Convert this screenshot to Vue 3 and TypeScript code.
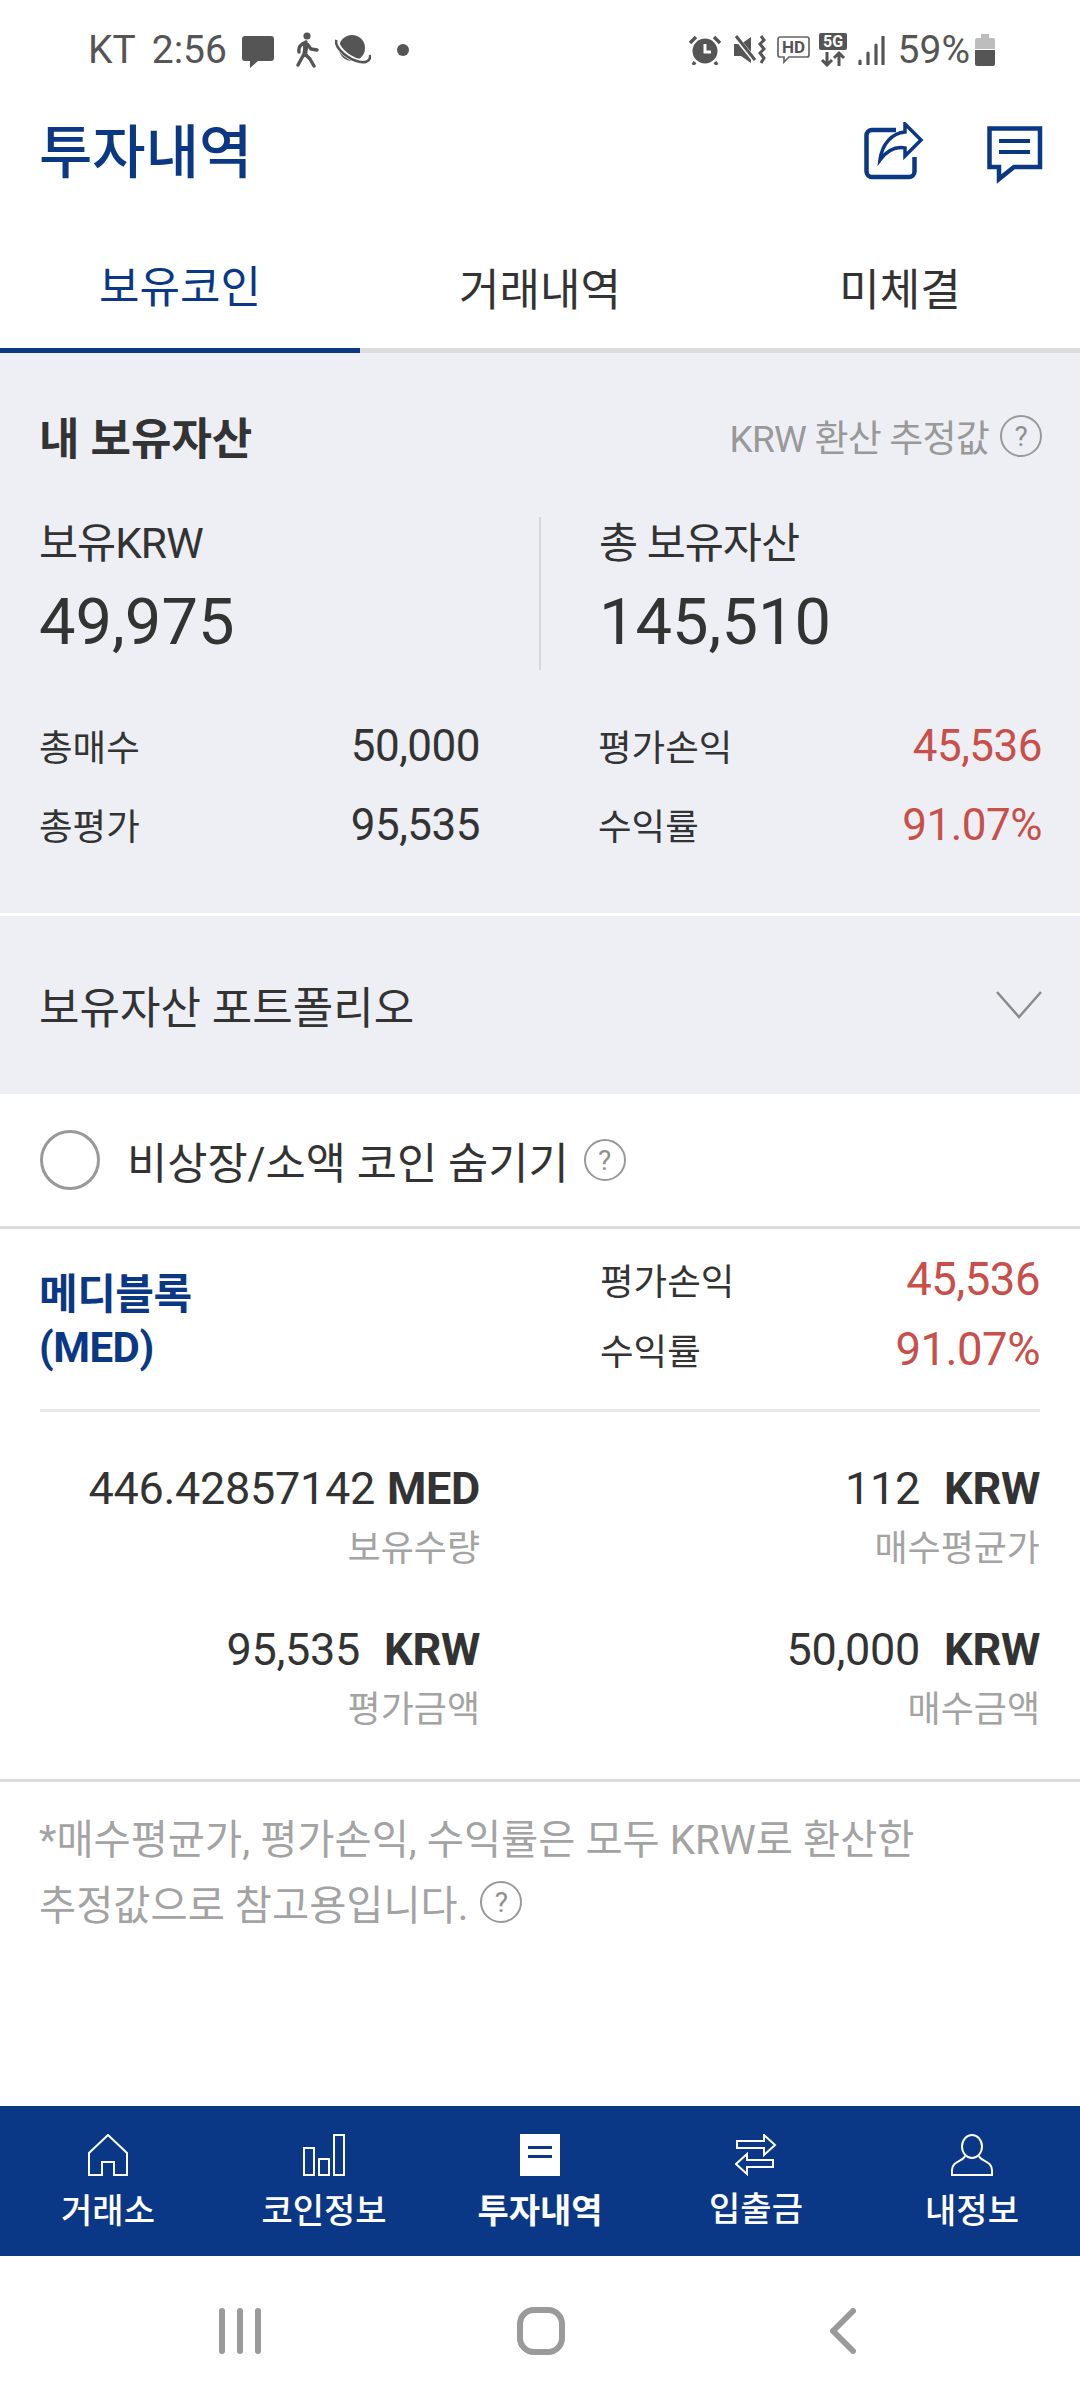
<script setup lang="ts">
const stats = [
  { l: '총매수', v: '50,000', rl: '평가손익', rv: '45,536' },
  { l: '총평가', v: '95,535', rl: '수익률', rv: '91.07%' },
]
const details = [
  { n: '446.42857142', gap: 'thin', u: 'MED', l: '보유수량' },
  { n: '112', gap: 'wide', u: 'KRW', l: '매수평균가' },
  { n: '95,535', gap: 'wide', u: 'KRW', l: '평가금액' },
  { n: '50,000', gap: 'wide', u: 'KRW', l: '매수금액' },
]
</script>

<template>
  <div class="page">
    <div class="status">
      <span class="st-text kt">KT</span>
      <span class="st-text time">2:56</span>
      <svg class="s-msg" width="32" height="32" viewBox="0 0 32 32"><path d="M3 0H29a3 3 0 0 1 3 3V22a3 3 0 0 1-3 3H16L8 32V25H3a3 3 0 0 1-3-3V3a3 3 0 0 1 3-3Z" fill="#555"/></svg>
      <svg class="s-walk" width="24" height="36" viewBox="0 0 24 36"><circle cx="12" cy="4" r="3.6" fill="#555"/><path d="M11 10C6 12 3 15 4 20M11 10 9 22 3 33M10 22 15 27 19 34M13 13 16 17 22 18" fill="none" stroke="#555" stroke-width="3.4" stroke-linecap="round" stroke-linejoin="round"/><path d="M8 11h6l-2 12H8Z" fill="#555"/></svg>
      <svg class="s-planet" width="36" height="30" viewBox="0 0 36 30"><circle cx="17" cy="13" r="13" fill="#555"/><path d="M3 4C-1 9 8 20 20 25 29 28 35 26 34 20" fill="none" stroke="#fff" stroke-width="5"/><path d="M1.5 5C-1 11 9 21 20 25.500 29 29 36 27 35 20" fill="none" stroke="#555" stroke-width="2.600"/></svg>
      <span class="s-dot"></span>
      <span class="spacer"></span>
      <svg class="s-alarm" width="32" height="30" viewBox="0 0 32 30"><circle cx="16" cy="16" r="12.500" fill="#555"/><path d="M16 9v8h6" fill="none" stroke="#fff" stroke-width="3"/><path d="M1 8 7 2M31 8 25 2M6 27 4 30M26 27 28 30" stroke="#555" stroke-width="3.400" fill="none"/></svg>
      <svg class="s-mute" width="32" height="30" viewBox="0 0 32 30"><path d="M0 9H7L17 2V28L7 21H0Z" fill="#555"/><path d="M1 1 22 27" stroke="#fff" stroke-width="5"/><path d="M2 1 21 25" stroke="#555" stroke-width="3"/><path d="M27 1l3 4-4 4 4 5-4 4 4 5-3 5" fill="none" stroke="#555" stroke-width="3"/></svg>
      <svg class="s-hd" width="33" height="28" viewBox="0 0 33 28"><path d="M3 1H30a2 2 0 0 1 2 2V19a2 2 0 0 1-2 2H12L7 26V21H3a2 2 0 0 1-2-2V3a2 2 0 0 1 2-2Z" fill="none" stroke="#666" stroke-width="1.700"/><text x="16.500" y="17" class="ic-text" font-size="17" font-weight="700" text-anchor="middle" fill="#555">HD</text></svg>
      <svg class="s-5g" width="28" height="34" viewBox="0 0 28 34"><rect width="28" height="17" rx="2" fill="#555"/><text x="14" y="14" class="ic-text" font-size="16" font-weight="700" text-anchor="middle" fill="#fff">5G</text><path d="M8 19V32M3 27l5 5 5-5M20 33V20M15 25l5-5 5 5" fill="none" stroke="#555" stroke-width="3"/></svg>
      <svg class="s-signal" width="27" height="29" viewBox="0 0 27 29"><path d="M2 25v3M10 17v11M18 9v19M25 1v27" stroke="#555" stroke-width="3.200" stroke-linecap="round"/></svg>
      <span class="st-text pct">59%</span>
      <svg class="s-batt" width="20" height="32" viewBox="0 0 20 32"><path d="M6 0h8v4h4a2 2 0 0 1 2 2V15H0V6a2 2 0 0 1 2-2H6Z" fill="#bdbdbd"/><path d="M0 16H20V30a2 2 0 0 1-2 2H2a2 2 0 0 1-2-2Z" fill="#555"/></svg>
    </div>

    <header class="head">
      <h1 class="title">투자내역</h1>
      <svg class="h-share" width="60" height="58" viewBox="0 0 60 58">
        <path d="M32 8H8a5.500 5.500 0 0 0-5.500 5.500V49.500A5.500 5.500 0 0 0 8 55H45a5.500 5.500 0 0 0 5.500-5.500V35" fill="none" stroke="#0b3885" stroke-width="4.500"/>
        <path d="M41 2 57 18 41 34V26C30 24 22 30 16 38 18 22 28 11 41 10Z" fill="#fff" stroke="#0b3885" stroke-width="3.500" stroke-linejoin="miter"/>
      </svg>
      <svg class="h-msg" width="56" height="58" viewBox="0 0 56 58">
        <path d="M2.500 2.500H53V41H27L12 53V41H2.500Z" fill="none" stroke="#0b3885" stroke-width="4.500"/>
        <path d="M12 15H43M12 26H43" stroke="#0b3885" stroke-width="4"/>
      </svg>
    </header>

    <nav class="tabs">
      <div class="tab active">보유코인</div>
      <div class="tab">거래내역</div>
      <div class="tab">미체결</div>
    </nav>

    <section class="panel">
      <div class="panel-head">
        <span class="panel-title">내 보유자산</span>
        <span class="hint">KRW 환산 추정값<span class="help big">?</span></span>
      </div>
      <div class="summary">
        <div class="sum-col">
          <div class="sum-label">보유KRW</div>
          <div class="sum-num">49,975</div>
        </div>
        <div class="sum-col sum-right">
          <div class="sum-label">총 보유자산</div>
          <div class="sum-num">145,510</div>
        </div>
      </div>
      <div class="stats">
        <div v-for="s in stats" :key="s.l" class="stat-row">
          <div class="stat"><span class="stat-l">{{ s.l }}</span><span class="stat-v">{{ s.v }}</span></div>
          <div class="stat"><span class="stat-l">{{ s.rl }}</span><span class="stat-v red">{{ s.rv }}</span></div>
        </div>
      </div>
    </section>

    <section class="portfolio">
      <span>보유자산 포트폴리오</span>
      <svg width="46" height="28" viewBox="0 0 46 28"><path d="M1 1 23 26 45 1" fill="none" stroke="#8a8a8a" stroke-width="2.500"/></svg>
    </section>

    <section class="option">
      <span class="radio"></span>
      <span class="option-text">비상장/소액 코인 숨기기</span>
      <span class="help">?</span>
    </section>

    <section class="coin">
      <div class="coin-name">메디블록<br />(MED)</div>
      <div class="coin-stats">
        <div class="stat coin-line"><span class="stat-l">평가손익</span><span class="coin-v red">45,536</span></div>
        <div class="stat coin-line"><span class="stat-l">수익률</span><span class="coin-v red">91.07%</span></div>
      </div>
    </section>
    <div class="inner-sep"></div>

    <section class="details">
      <div v-for="d in details" :key="d.l" class="cell">
        <div class="cell-v">{{ d.n }}<span :class="['cell-u', d.gap]">{{ d.u }}</span></div>
        <div class="cell-l">{{ d.l }}</div>
      </div>
    </section>

    <section class="note">
      <p>*매수평균가, 평가손익, 수익률은 모두 KRW로 환산한</p>
      <p>추정값으로 참고용입니다.<span class="help">?</span></p>
    </section>

    <footer class="bottom">
      <div class="bn">
        <svg width="40" height="42" viewBox="0 0 40 42"><path d="M1 41V19L20 1 39 19V41H26V28H14V41Z" fill="none" stroke="#fff" stroke-width="2"/></svg>
        <span>거래소</span>
      </div>
      <div class="bn">
        <svg width="42" height="42" viewBox="0 0 42 42"><path d="M1 14H11V41H1ZM16 25H26V41H16ZM31 1H41V41H31Z" fill="none" stroke="#fff" stroke-width="2"/></svg>
        <span>코인정보</span>
      </div>
      <div class="bn on">
        <svg width="40" height="42" viewBox="0 0 40 42"><rect width="40" height="42" fill="#fff"/><path d="M8 13.500H32M8 22.500H32" stroke="#0a3786" stroke-width="3"/></svg>
        <span>투자내역</span>
      </div>
      <div class="bn">
        <svg width="42" height="42" viewBox="0 0 42 42"><path d="M2 7H29V1L40 11 29 21V14H2ZM38 26H12V20L1 30 12 40V33H38Z" fill="none" stroke="#fff" stroke-width="2"/></svg>
        <span class="up">입출금</span>
      </div>
      <div class="bn">
        <svg width="42" height="42" viewBox="0 0 42 42"><ellipse cx="21" cy="12.500" rx="10" ry="11.500" fill="none" stroke="#fff" stroke-width="2"/><path d="M14 22C13 27 1 27 1 36V41H41V36C41 27 29 27 28 22" fill="none" stroke="#fff" stroke-width="2"/></svg>
        <span>내정보</span>
      </div>
    </footer>

    <div class="keys">
      <svg width="44" height="46" viewBox="0 0 44 46"><path d="M4 3V43M22 3V43M40 3V43" stroke="#9a9a9a" stroke-width="6" stroke-linecap="round"/></svg>
      <svg width="50" height="50" viewBox="0 0 50 50"><rect x="4" y="4" width="42" height="42" rx="14" fill="none" stroke="#9a9a9a" stroke-width="6"/></svg>
      <svg width="28" height="46" viewBox="0 0 28 46"><path d="M24 3 4 23 24 43" fill="none" stroke="#9a9a9a" stroke-width="6" stroke-linecap="round" stroke-linejoin="round"/></svg>
    </div>
  </div>
</template>

<style>
html, body { margin: 0; background: #fff; }
</style>

<style scoped>
.page {
  width: 1080px;
  height: 2400px;
  display: flex;
  flex-direction: column;
  background: #fff;
  color: #333;
  overflow: hidden;
  font-family: Roboto, "Noto Sans CJK KR", sans-serif;
}
.ic-text { font-family: Roboto, sans-serif; }
.status {
  height: 100px;
  flex: none;
  display: flex;
  align-items: center;
  padding: 0 85px 0 88px;
  box-sizing: border-box;
}
.st-text { font-size: 39px; color: #555; line-height: 1; }
.time { margin-left: 16px; }
.s-msg { margin-left: 15px; margin-top: 3px; }
.s-walk { margin-left: 21px; }
.s-planet { margin-left: 16px; }
.s-dot { width: 12px; height: 12px; border-radius: 50%; background: #555; margin-left: 26px; }
.spacer { flex: 1; }
.s-alarm { margin-left: -3px; }
.s-mute { margin-left: 13px; }
.s-hd { margin-left: 11px; }
.s-5g { margin-left: 9px; }
.s-signal { margin-left: 11px; }
.pct { margin-left: 13px; }
.s-batt { margin-left: 5px; }

.head {
  height: 104px;
  flex: none;
  display: flex;
  align-items: center;
  padding: 0 37px 0 39px;
}
.title {
  margin: 0;
  flex: 1;
  font-size: 58px;
  font-weight: 500;
  color: #0b3885;
  line-height: 1;
  padding-top: 1px;
}
.h-share { margin-right: 63px; margin-top: -3px; }
.h-msg { margin-top: 5px; }

.tabs {
  height: 149px;
  flex: none;
  display: grid;
  grid-template-columns: repeat(3, 1fr);
  box-sizing: border-box;
  border-bottom: 5px solid #dcdcdc;
}
.tab {
  display: flex;
  align-items: center;
  justify-content: center;
  font-size: 44px;
  color: #333;
  height: 149px;
  box-sizing: border-box;
  padding-top: 40px;
  padding-bottom: 24px;
}
.tab.active {
  color: #0b3885;
  border-bottom: 5px solid #0b3885;
}

.panel {
  flex: none;
  height: 560px;
  box-sizing: border-box;
  background: #edeff5;
  padding: 50px 38px 0 39px;
}
.panel-head {
  height: 66px;
  display: flex;
  align-items: center;
  justify-content: space-between;
}
.panel-title { font-size: 44px; font-weight: 700; color: #333; }
.hint { display: flex; align-items: center; font-size: 37px; color: #999; letter-spacing: -0.8px; }
.help {
  display: inline-flex;
  align-items: center;
  justify-content: center;
  width: 42px;
  height: 42px;
  box-sizing: border-box;
  border: 2.5px solid #999;
  border-radius: 50%;
  color: #8f8f8f;
  font-size: 28px;
  letter-spacing: 0;
  font-weight: 400;
  flex: none;
}
.help.big { margin-left: 11px; }

.summary {
  margin-top: 48px;
  height: 153px;
  display: flex;
}
.sum-col { width: 500px; }
.sum-right {
  border-left: 2px solid #d6d8de;
  padding-left: 58px;
  box-sizing: border-box;
  width: 503px;
}
.sum-label { font-size: 42.5px; line-height: 52px; color: #333; letter-spacing: -1px; padding-top: 1px; }
.sum-num { font-size: 65px; line-height: 80px; margin-top: 12px; color: #333; }

.stats { margin-top: 36px; }
.stat-row { display: grid; grid-template-columns: 441px 444px; column-gap: 118px; height: 79px; }
.stat { display: flex; align-items: center; justify-content: space-between; }
.stat-l { font-size: 36.5px; color: #333; }
.stat-v { font-size: 44px; color: #333; letter-spacing: -0.5px; }
.red { color: #c94f4a; }

.portfolio {
  flex: none;
  height: 178px;
  margin-top: 3px;
  background: #edeff5;
  display: flex;
  align-items: center;
  justify-content: space-between;
  padding: 0 38px 0 39px;
  font-size: 44px;
  color: #333;
}

.option {
  flex: none;
  height: 135px;
  box-sizing: border-box;
  border-bottom: 3px solid #dcdcdc;
  display: flex;
  align-items: center;
  padding: 0 40px;
}
.radio {
  width: 60px;
  height: 60px;
  box-sizing: border-box;
  border: 3px solid #999;
  border-radius: 50%;
  flex: none;
}
.option-text { margin-left: 27px; font-size: 43.7px; color: #333; white-space: nowrap; }
.option .help { margin-left: 15px; }

.coin {
  flex: none;
  height: 180px;
  box-sizing: border-box;
  display: flex;
  justify-content: space-between;
  padding: 15px 40px 0 39px;
}
.coin-name {
  font-size: 42px;
  font-weight: 700;
  color: #0b3885;
  line-height: 53px;
  margin-top: 24px;
  letter-spacing: -0.5px;
}
.coin-stats { width: 440px; }
.coin-line { height: 70px; }
.coin-v { font-size: 45.5px; letter-spacing: -0.5px; }
.inner-sep { flex: none; height: 3px; margin: 0 40px; background: #e8e8e8; }

.details {
  flex: none;
  display: grid;
  grid-template-columns: 442px 440px;
  column-gap: 120px;
  row-gap: 41px;
  padding: 47px 38px 39px;
  border-bottom: 3px solid #dcdcdc;
}
.cell { text-align: right; }
.cell-v { font-size: 45px; line-height: 60px; color: #333; white-space: nowrap; letter-spacing: -0.3px; }
.cell-u { font-weight: 700; color: #333; }
.cell-u.thin { margin-left: 12px; }
.cell-u.wide { margin-left: 24px; }
.cell-l { font-size: 36px; line-height: 60px; color: #a3a3a3; }

.note { flex: none; padding: 21px 39px 0; color: #a3a3a3; font-size: 40.4px; }
.note p { margin: 0; height: 66px; display: flex; align-items: center; white-space: nowrap; }
.note .help { margin-left: 12px; }

.bottom {
  flex: none;
  margin-top: auto;
  height: 150px;
  background: #0a3786;
  display: grid;
  grid-template-columns: repeat(5, 216px);
}
.bn {
  display: flex;
  flex-direction: column;
  align-items: center;
  padding-top: 28px;
  box-sizing: border-box;
  color: #fff;
  font-size: 34px;
  font-weight: 500;
}
.bn span { line-height: 44px; margin-top: 13px; white-space: nowrap; }
.bn span.up { margin-top: 11px; }
.bn.on { font-weight: 700; }

.keys {
  flex: none;
  height: 144px;
  box-sizing: border-box;
  padding-top: 6px;
  display: grid;
  grid-template-columns: repeat(3, 1fr);
  align-items: center;
  justify-items: center;
}
.keys svg:first-child { margin-left: 120px; }
.keys svg:nth-child(2) { margin-left: 2px; }
.keys svg:last-child { margin-right: 114px; }
</style>
